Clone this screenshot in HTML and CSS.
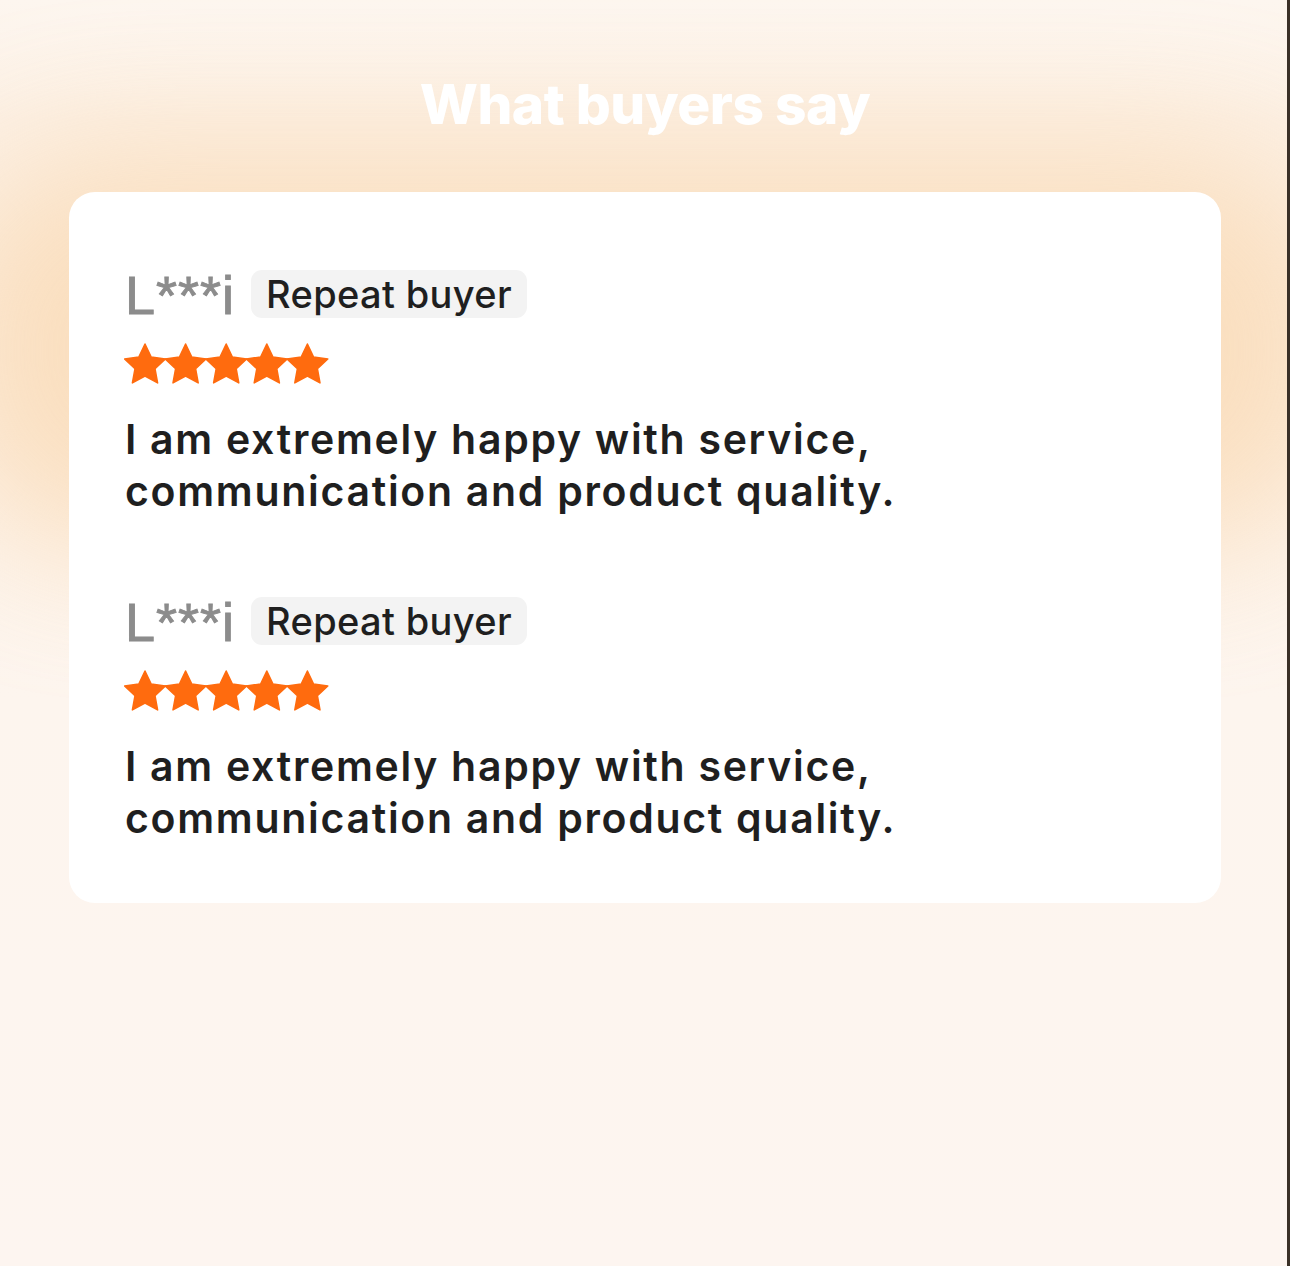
FILE: index.html
```html
<!DOCTYPE html>
<html lang="en">
<head>
<meta charset="utf-8">
<title>What buyers say</title>
<link rel="stylesheet" href="styles.css">
</head>
<body>
<main class="page">
  <div class="glow" aria-hidden="true"></div>
  <h1 class="title">What buyers say</h1>
  <section class="card">
    <article class="review">
      <div class="review-head">
        <span class="buyer">L***i</span>
        <span class="badge">Repeat buyer</span>
      </div>
      <svg class="stars" width="206" height="44" viewBox="0 0 206 44" aria-label="5 stars">
        <defs>
          <polygon id="star" points="0,-21.5 6.2,-8.5 20.4,-6.6 10,3.2 12.6,17.4 0,10.5 -12.6,17.4 -10,3.2 -20.4,-6.6 -6.2,-8.5"/>
        </defs>
        <use href="#star" x="21" y="22.5"/>
        <use href="#star" x="61.6" y="22.5"/>
        <use href="#star" x="102.2" y="22.5"/>
        <use href="#star" x="142.8" y="22.5"/>
        <use href="#star" x="183.4" y="22.5"/>
      </svg>
      <p class="text">I am extremely happy with service,<br>communication and product quality.</p>
    </article>
    <article class="review">
      <div class="review-head">
        <span class="buyer">L***i</span>
        <span class="badge">Repeat buyer</span>
      </div>
      <svg class="stars" width="206" height="44" viewBox="0 0 206 44" aria-label="5 stars">
        <use href="#star" x="21" y="22.5"/>
        <use href="#star" x="61.6" y="22.5"/>
        <use href="#star" x="102.2" y="22.5"/>
        <use href="#star" x="142.8" y="22.5"/>
        <use href="#star" x="183.4" y="22.5"/>
      </svg>
      <p class="text">I am extremely happy with service,<br>communication and product quality.</p>
    </article>
  </section>
</main>
</body>
</html>
```

FILE: styles.css
```css
html, body {
  margin: 0;
  padding: 0;
}

body {
  background: #fdf5ee;
  font-family: Inter, "Noto Sans", sans-serif;
  border-right: 3px solid #3a3027;
  min-height: 1266px;
  box-sizing: border-box;
  overflow: hidden;
}

.page {
  position: relative;
  min-height: 1266px;
  padding: 72px 66px 0 69px;
  box-sizing: border-box;
  background: linear-gradient(180deg, #fdf6ef 0px, #fcf1e6 120px, #fdf5ee 700px, #fdf5f0 100%);
}

/* warm halo sitting behind the top of the card */
.glow {
  position: absolute;
  left: -60px;
  right: -60px;
  top: 150px;
  height: 400px;
  background: #f9d3a6;
  border-radius: 160px;
  filter: blur(70px);
  opacity: 0.62;
  z-index: 0;
}

.title {
  position: relative;
  z-index: 1;
  margin: 0 0 56px;
  text-align: center;
  color: #ffffff;
  font-size: 55px;
  font-weight: 800;
  line-height: 64px;
  letter-spacing: -0.5px;
}

.card {
  position: relative;
  z-index: 1;
  background: #ffffff;
  border-radius: 26px;
  padding: 78px 56px 59px 56px;
  display: flex;
  flex-direction: column;
  gap: 80px;
}

.review {
  display: flex;
  flex-direction: column;
}

.review-head {
  display: flex;
  align-items: center;
  gap: 16px;
  height: 48px;
}

.buyer {
  font-family: "Liberation Sans", Arial, sans-serif;
  font-size: 54px;
  line-height: 48px;
  color: #8c8c8c;
  padding-top: 2px;
  letter-spacing: 1px;
  -webkit-text-stroke: 0.9px #8c8c8c;
}

.badge {
  display: inline-flex;
  align-items: center;
  height: 48px;
  padding: 0 15px;
  background: #f3f3f3;
  border-radius: 11px;
  color: #1f1f1f;
  font-size: 38px;
  font-weight: 500;
  letter-spacing: 0.35px;
}

.stars {
  display: block;
  margin: 25px 0 0 -1px;
  fill: #ff6b0e;
  stroke: #ff6b0e;
  stroke-width: 1.5;
  stroke-linejoin: round;
}

.text {
  margin: 26px 0 0;
  font-size: 41px;
  font-weight: 560;
  line-height: 52px;
  color: #1f1f1f;
  letter-spacing: 1.7px;
}
```
